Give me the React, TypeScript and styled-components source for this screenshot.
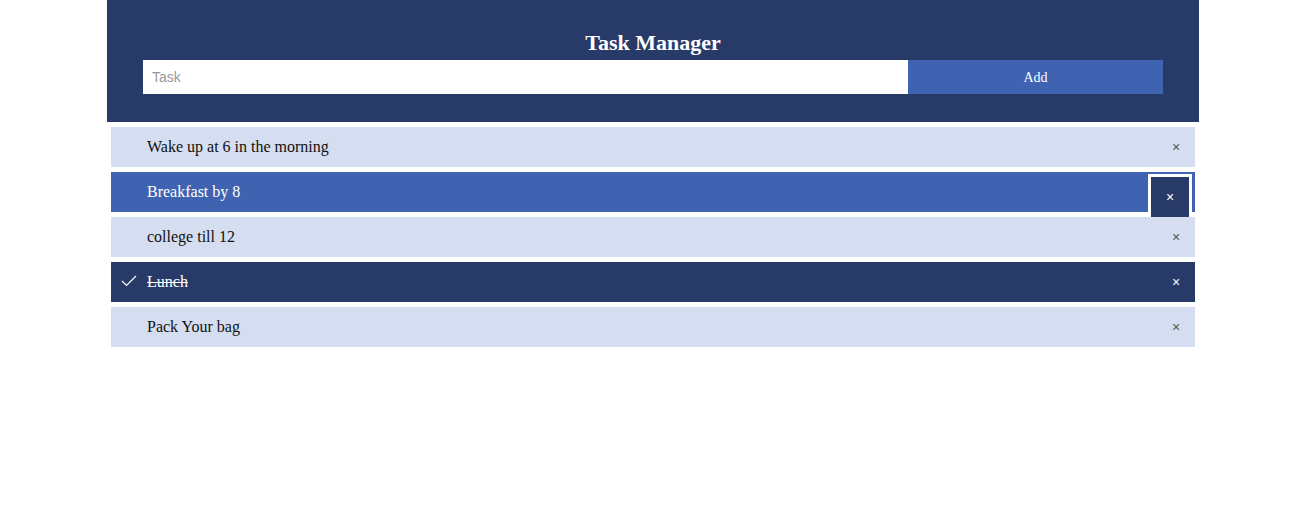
import React from "react";
import styled, { createGlobalStyle } from "styled-components";

const Global = createGlobalStyle`
  *, *::before, *::after { box-sizing: border-box; }
  body { margin: 0; background: #fff; font-family: "Liberation Serif", "Times New Roman", serif; }
`;

const Page = styled.div`
  width: 1092px;
  margin-left: 107px;
`;

const Header = styled.header`
  background: #273a68;
  padding: 29px 36px 28px;
  display: flex;
  flex-direction: column;
  align-items: stretch;
`;

const Title = styled.h2`
  margin: 0 0 3px;
  color: #fff;
  text-align: center;
  font-family: "Liberation Serif", serif;
  font-weight: bold;
  font-size: 22px;
  line-height: 28px;
`;

const Form = styled.div`
  display: flex;
  height: 34px;
`;

const Input = styled.input`
  flex: 0 0 765px;
  border: none;
  outline: none;
  padding: 0 9px;
  font-family: "Liberation Sans", Arial, sans-serif;
  font-size: 14px;
  color: #333;
  &::placeholder { color: #999; }
`;

const AddButton = styled.button`
  flex: 1;
  border: none;
  padding: 2px 0 0;
  background: #3f63b0;
  color: #fff;
  font-family: "Liberation Serif", serif;
  font-size: 14px;
  cursor: pointer;
`;

const List = styled.ul`
  list-style: none;
  margin: 5px 4px 0;
  padding: 0;
  display: flex;
  flex-direction: column;
  gap: 5px;
`;

type Variant = "normal" | "hover" | "done";

const Item = styled.li<{ $v: Variant }>`
  position: relative;
  height: 40px;
  display: flex;
  align-items: center;
  padding-left: 36px;
  font-size: 16px;
  background: ${(p) => (p.$v === "hover" ? "#3f63b0" : p.$v === "done" ? "#273a68" : "#d5ddf0")};
  color: ${(p) => (p.$v === "normal" ? "#111" : "#fff")};
  text-decoration: ${(p) => (p.$v === "done" ? "line-through" : "none")};
`;

const Check = styled.svg`
  position: absolute;
  left: 10px;
  top: 13px;
`;

const Close = styled.span<{ $v: Variant }>`
  position: absolute;
  right: ${(p) => (p.$v === "hover" ? "3px" : "0")};
  top: ${(p) => (p.$v === "hover" ? "2px" : "0")};
  width: ${(p) => (p.$v === "hover" ? "44px" : "38px")};
  height: ${(p) => (p.$v === "hover" ? "43px" : "40px")};
  display: flex;
  align-items: center;
  justify-content: center;
  font-family: "Liberation Sans", Arial, sans-serif;
  font-size: 14px;
  color: ${(p) => (p.$v === "normal" ? "#555" : "#fff")};
  background: ${(p) => (p.$v === "hover" ? "#273a68" : "transparent")};
  border: ${(p) => (p.$v === "hover" ? "3px solid #fff" : "none")};
  border-bottom: none;
  z-index: 1;
`;

const tasks: { text: string; v: Variant }[] = [
  { text: "Wake up at 6 in the morning", v: "normal" },
  { text: "Breakfast by 8", v: "hover" },
  { text: "college till 12", v: "normal" },
  { text: "Lunch", v: "done" },
  { text: "Pack Your bag", v: "normal" },
];

export default function App() {
  return (
    <Page>
      <Global />
      <Header>
        <Title>Task Manager</Title>
        <Form>
          <Input placeholder="Task" />
          <AddButton>Add</AddButton>
        </Form>
      </Header>
      <List>
        {tasks.map((t) => (
          <Item key={t.text} $v={t.v}>
            {t.v === "done" && (
              <Check width="16" height="12" viewBox="0 0 16 12">
                <polyline points="1,6 5.5,10.5 15,1" fill="none" stroke="#fff" strokeWidth="1.2" />
              </Check>
            )}
            {t.text}
            <Close $v={t.v}>×</Close>
          </Item>
        ))}
      </List>
    </Page>
  );
}
